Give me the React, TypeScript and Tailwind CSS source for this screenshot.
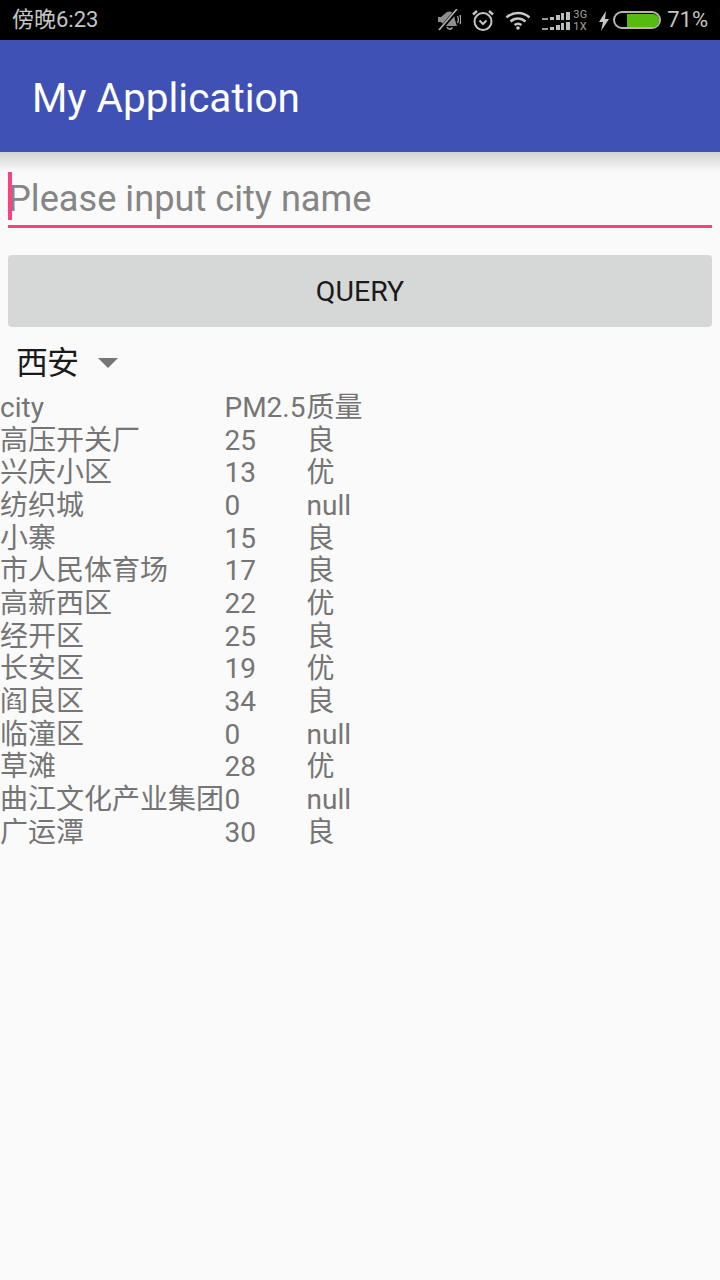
const rows = [
  ["city", "PM2.5", "质量"],
  ["高压开关厂", "25", "良"],
  ["兴庆小区", "13", "优"],
  ["纺织城", "0", "null"],
  ["小寨", "15", "良"],
  ["市人民体育场", "17", "良"],
  ["高新西区", "22", "优"],
  ["经开区", "25", "良"],
  ["长安区", "19", "优"],
  ["阎良区", "34", "良"],
  ["临潼区", "0", "null"],
  ["草滩", "28", "优"],
  ["曲江文化产业集团", "0", "null"],
  ["广运潭", "30", "良"],
];

function StatusIcons() {
  return (
    <div className="flex items-center">
      {/* muted bell */}
      <svg width="24" height="22" viewBox="0 0 24 22" fill="none" className="mr-[11px]">
        <path d="M1 8h3l6-5c3-1.500 6 0 7 3l1 5 2 6H8l-4-4H1z" fill="#8f8f8f" />
        <path d="M10 18c1 2.500 4 2.500 5.500 .5" stroke="#8f8f8f" strokeWidth="2" />
        <path d="M2 22 20 1" stroke="#000" strokeWidth="4" />
        <path d="M2 21 20 0" stroke="#b0b0b0" strokeWidth="1.700" />
        <path d="M20.500 7c1 2 1 5 0 7M23 6c1 3 1 6 0 9" stroke="#a8a8a8" strokeWidth="1.300" />
      </svg>
      {/* alarm */}
      <svg width="22" height="24" viewBox="0 0 22 24" fill="none" className="mr-[11px]">
        <circle cx="11" cy="13.500" r="8.500" stroke="#c4c4c4" strokeWidth="2" />
        <path d="M7.500 12.500 11 16l3.500-3.500" stroke="#c4c4c4" strokeWidth="2" />
        <path d="M1 6.500 5 3M21 6.500 17 3" stroke="#c4c4c4" strokeWidth="2.500" />
      </svg>
      {/* wifi */}
      <svg width="26" height="20" viewBox="0 0 26 20" fill="none" className="mr-[11px]">
        <path d="M1.500 7.500c6.500-6 16.500-6 23 0" stroke="#c8c8c8" strokeWidth="2.400" />
        <path d="M5.500 11.500c4.500-4 10.500-4 15 0" stroke="#c8c8c8" strokeWidth="2.400" />
        <path d="M9.500 15c2-1.500 5-1.500 7 0" stroke="#c8c8c8" strokeWidth="2.400" />
        <circle cx="13" cy="18" r="1.800" fill="#c8c8c8" />
      </svg>
      {/* dual signal */}
      <svg width="28" height="18" viewBox="0 0 28 18" fill="#bdbdbd" className="mr-[3px] mt-[2px]">
        <rect x="0" y="6" width="6" height="2" fill="#9a9a9a" />
        <rect x="8" y="5" width="4" height="3" />
        <rect x="14" y="3" width="4" height="5" />
        <rect x="19" y="1" width="3" height="7" />
        <rect x="24" y="0" width="4" height="8" />
        <rect x="0" y="16" width="6" height="2" fill="#9a9a9a" />
        <rect x="8" y="15" width="4" height="3" />
        <rect x="14" y="13" width="4" height="5" />
        <rect x="19" y="11" width="3" height="7" />
        <rect x="24" y="10" width="4" height="8" />
      </svg>
      <div className="w-[16px] mr-[9px] mt-[2px] flex flex-col text-[11px] leading-[12px] tracking-[0.5px] text-[#a0a0a0]">
        <span>3G</span>
        <span>1X</span>
      </div>
      {/* charging bolt */}
      <svg width="12" height="20" viewBox="0 0 12 20" fill="#c8c8c8" className="mr-[3px] mt-[1px]">
        <path d="M8 0 1 11h4l-2 9 8-12H7z" />
      </svg>
      {/* battery */}
      <div className="w-[48px] h-[18px] rounded-[9px] border-2 border-[#b5b5b5] flex justify-end items-center p-[0.500px] mr-[6px]">
        <div className="w-[32px] h-[13px] rounded-r-[6px] bg-[#55bb11]" />
      </div>
      <span className="text-[22px] leading-none text-[#c4c4c4]">71%</span>
    </div>
  );
}

export default function App() {
  return (
    <div className="w-[720px] h-[1280px] bg-[#fafafa] font-['Roboto','Noto_Sans_CJK_SC',sans-serif] overflow-hidden">
      <div className="h-10 bg-black flex items-center justify-between px-[12px]">
        <span className="text-[22px] leading-none text-[#c4c4c4]">傍晚6:23</span>
        <StatusIcons />
      </div>

      <header className="relative h-28 bg-[#3f51b5] flex items-center pl-[32px] pt-[4px]">
        <span className="text-[40.500px] leading-none text-white">My Application</span>
        {/* toolbar drop shadow */}
        <div className="absolute left-0 right-0 top-full h-[20px] bg-linear-to-b from-[#d2d2d2] to-transparent" />
      </header>

      <div className="px-2 pt-5">
        <div className="relative h-[56px] border-b-[3px] border-[#fb4281] flex items-center pt-[2px]">
          <div className="absolute left-0 top-0 w-1 h-[48px] bg-[#fb4281]" />
          <span className="text-[36.200px] leading-none text-[#858585]">Please input city name</span>
        </div>

        <button className="mt-[27px] w-full h-[72px] pt-[2px] rounded bg-[#d6d7d7] text-[28.500px] text-[#1a1a1a]">QUERY</button>

        <div className="h-[70px] flex items-center pl-[8px] pt-[2px] text-[#1a1a1a]">
          <span className="text-[32px] leading-none tracking-[-1px]">西安</span>
          <svg width="20" height="10" viewBox="0 0 20 10" className="ml-[20px]">
            <path d="M0 0h20L10 10z" fill="#757575" />
          </svg>
        </div>
      </div>

      <div className="-mt-[5px] text-[28px] leading-[32.680px] text-[#757575]">
        {rows.map((row) => (
          <div key={row[0]} className="grid grid-cols-[224.500px_82px_1fr] h-[32.680px]">
            <span className="whitespace-nowrap">{row[0]}</span>
            <span>{row[1]}</span>
            <span>{row[2]}</span>
          </div>
        ))}
      </div>
    </div>
  );
}
